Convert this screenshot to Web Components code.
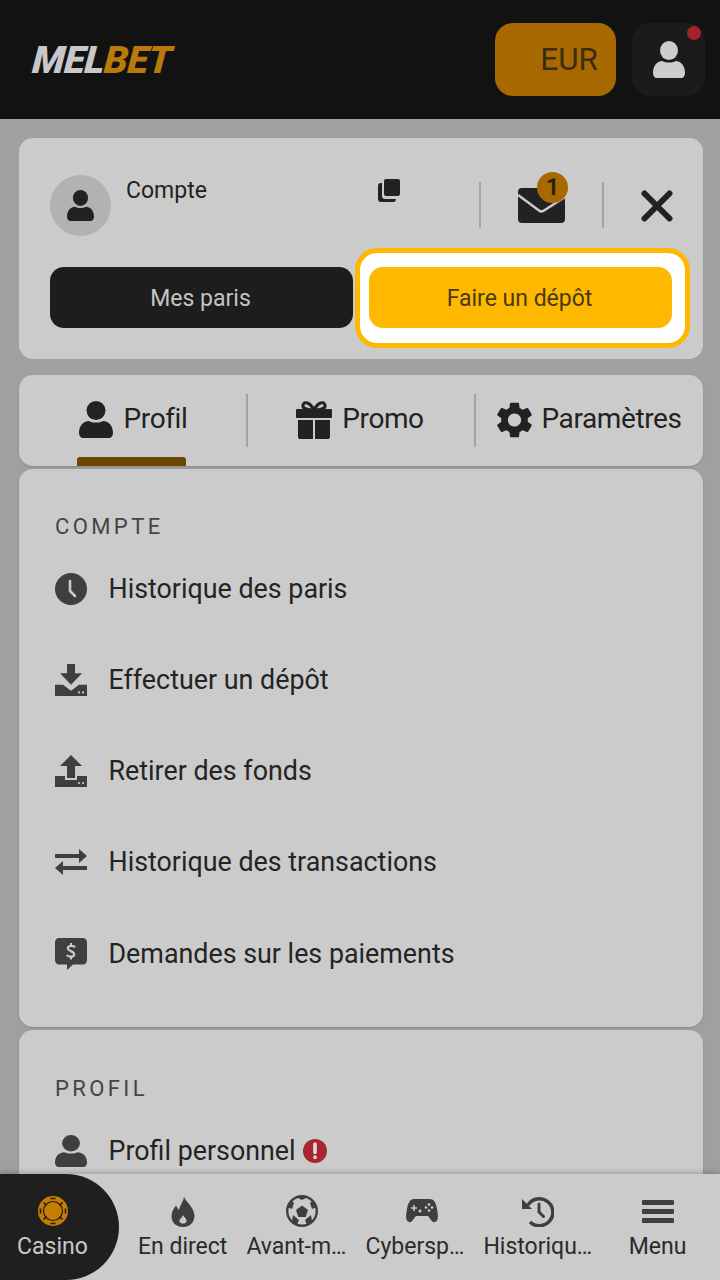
<!DOCTYPE html>
<html lang="fr">
<head>
<meta charset="utf-8">
<title>Melbet</title>
<style>
    html, body { margin: 0; height: 100%; }
    body {
        width: 720px;
        height: 1280px;
        overflow: hidden;
        display: flex;
        flex-direction: column;
        background: #a0a0a0;
        color: #222;
        font-family: Roboto, "Liberation Sans", sans-serif;
    }
    main {
        flex: 1;
        min-height: 0;
        overflow: hidden;
        display: flex;
        flex-direction: column;
        padding: 19px 17px 0 19px;
    }
</style>
</head>
<body>
<app-header></app-header>
<main>
    <account-card></account-card>
    <tab-bar></tab-bar>
    <menu-section title="COMPTE" top="44" bottom="28">
        <menu-item icon="clock">Historique des paris</menu-item>
        <menu-item icon="download">Effectuer un dépôt</menu-item>
        <menu-item icon="upload">Retirer des fonds</menu-item>
        <menu-item icon="transfer">Historique des transactions</menu-item>
        <menu-item icon="payment">Demandes sur les paiements</menu-item>
    </menu-section>
    <menu-section title="PROFIL" top="45" bottom="60">
        <menu-item icon="person" alert>Profil personnel</menu-item>
    </menu-section>
</main>
<bottom-nav>
    <nav-item icon="chip" active>Casino</nav-item>
    <nav-item icon="flame">En direct</nav-item>
    <nav-item icon="ball" shift="12">Avant-m…</nav-item>
    <nav-item icon="pad" shift="14">Cybersp…</nav-item>
    <nav-item icon="history">Historiqu…</nav-item>
    <nav-item icon="bars" last>Menu</nav-item>
</bottom-nav>

<script>
const ICONS = {
    person: ['0 0 34 37', `<circle cx="17" cy="9.5" r="9.5"/><path d="M0 32C0 24 5 20 10 20c3 2 11 2 14 0 5 0 10 4 10 12 0 3-2 5-4 5H4c-2 0-4-2-4-5z"/>`],
    gift: ['0 0 36 38', `<path d="M18 9C14 1 8 0 7 4s6 5 11 5 12-1 11-5-7-3-11 5z" fill="none" stroke="currentColor" stroke-width="3"/><rect y="8" width="36" height="9" rx="1"/><path d="M2 19h15v19H4a2 2 0 0 1-2-2zM19 19h15v17a2 2 0 0 1-2 2H19z"/>`],
    gear: ['2 1.5 20 21', `<path d="M19.14 12.94c.04-.3.06-.61.06-.94 0-.32-.02-.64-.07-.94l2.03-1.58c.18-.14.23-.41.12-.61l-1.92-3.32c-.12-.22-.37-.29-.59-.22l-2.39.96c-.5-.38-1.03-.7-1.62-.94l-.36-2.54c-.04-.24-.24-.41-.48-.41h-3.84c-.24 0-.43.17-.47.41l-.36 2.54c-.59.24-1.13.57-1.62.94l-2.39-.96c-.22-.08-.47 0-.59.22L2.74 8.87c-.12.21-.08.47.12.61l2.03 1.58c-.05.3-.09.63-.09.94s.02.64.07.94l-2.03 1.58c-.18.14-.23.41-.12.61l1.92 3.32c.12.22.37.29.59.22l2.39-.96c.5.38 1.03.7 1.62.94l.36 2.54c.05.24.24.41.48.41h3.84c.24 0 .44-.17.47-.41l.36-2.54c.59-.24 1.13-.56 1.62-.94l2.39.96c.22.08.47 0 .59-.22l1.92-3.32c.12-.22.07-.47-.12-.61l-2.01-1.58zM12 15.6c-1.98 0-3.6-1.62-3.6-3.6s1.62-3.6 3.6-3.6 3.6 1.62 3.6 3.6-1.62 3.6-3.6 3.6z"/>`],
    clock: ['0 0 32 32', `<circle cx="16" cy="16" r="16"/><path d="M15 8v10l5 5" fill="none" stroke="#cbcbcb" stroke-width="2.6" stroke-linecap="round" stroke-linejoin="round"/>`],
    download: ['0 0 32 31', `<path d="M12 0h8v9h7L16 20 5 9h7z"/><path d="M0 20h8l8 6 8-6h8v11H0z"/><circle cx="24" cy="27.5" r="1.1" fill="#cbcbcb"/><circle cx="28" cy="27.5" r="1.1" fill="#cbcbcb"/>`],
    upload: ['0 0 32 32', `<path d="M16 0l11 11h-7v12h-8V11H5z"/><path d="M0 21h10v4h12v-4h10v11H0z"/><circle cx="24" cy="28" r="1.1" fill="#cbcbcb"/><circle cx="28" cy="28" r="1.1" fill="#cbcbcb"/>`],
    transfer: ['0 0 32 26', `<path d="M0 5h24V0l8 7-8 7V9H0z"/><path d="M32 17H8v-5l-8 7 8 7v-5h24z"/>`],
    payment: ['0 0 32 29', `<path d="M4 0h24a4 4 0 0 1 4 4v16a4 4 0 0 1-4 4H18l-6 5v-5H4a4 4 0 0 1-4-4V4a4 4 0 0 1 4-4z"/><path d="M20 8.500c-1-1.700-6.500-2-7.200.4-.8 3.200 7.200 2.800 6.400 6.400-.6 2.200-6.200 2.200-7.200 0M16 4.500v2.200M16 17.300v2.200" fill="none" stroke="#cbcbcb" stroke-width="2"/>`],
    copy: ['0 0 22 23', `<rect x="6" width="16" height="17" rx="2"/><path d="M0 7a3 3 0 0 1 3-3h1v13a3 3 0 0 0 3 3h11a3 3 0 0 1-3 3H3a3 3 0 0 1-3-3z"/>`],
    mail: ['0 0 47 35', `<rect width="47" height="35" rx="4"/><path d="M0 7l21 15.500q2.500 1.800 5 0L47 9" fill="none" stroke="#cbcbcb" stroke-width="2.500"/>`],
    close: ['0 0 32 32', `<path d="M3.500 3.500l25 25M28.500 3.500l-25 25" fill="none" stroke="currentColor" stroke-width="6" stroke-linecap="round"/>`],
    chip: ['0 0 30 30', `<circle cx="15" cy="15" r="15"/><circle cx="15" cy="15" r="9.500" fill="none" stroke="#1f1f1f" stroke-width="1.200"/><path d="M12.500 2.500h5M12.500 27.500h5M2.500 12.500v5M27.500 12.500v5M5.500 6.500l3 3M24.500 6.500l-3 3M5.500 23.500l3-3M24.500 23.500l-3-3" stroke="#1f1f1f" stroke-width="1.600" fill="none"/>`],
    flame: ['0 0 24 31', `<path d="M13 0c0 5 10 10 10.500 19.500 0 7-5 11.500-11.500 11.500S.5 27 .5 20c0-4 2-7 4.500-10.500 1 2 2 3.500 3 4.500C9 9 13 5 13 0z"/><path d="M12 19c1 2.500 4 3.500 3.500 6.500-.5 2.500-6 3-7 0-.5-2.500 2.500-3.500 3.500-6.500z" fill="#cbcbcb"/>`],
    ball: ['0 0 32 32', `<circle cx="16" cy="16" r="14.800" fill="none" stroke="currentColor" stroke-width="2.400"/><path d="M16 10.500l6 4.500-2.300 7h-7.400L10 15zM10 2l6 3 6-3-1-1H11zM1 12l5 2 2-6-3-3zM31 12l-5 2-2-6 3-3zM6 26l1-6 6 5-2 5zM26 26l-1-6-6 5 2 5z"/>`],
    pad: ['0 0 32 24', `<path d="M8 0h16c4 0 6 4 7 10s2 12-2 13c-3 1-5-4-7-6H10c-2 2-4 7-7 6C-1 22 0 16 1 10S4 0 8 0z"/><path d="M8 6v6M5 9h6M14 10.500v3M12.500 12h3" stroke="#cbcbcb" stroke-width="1.500" fill="none"/><circle cx="23" cy="5.500" r="1.300" fill="#cbcbcb"/><circle cx="26" cy="8.500" r="1.300" fill="#cbcbcb"/><circle cx="20" cy="8.500" r="1.300" fill="#cbcbcb"/><circle cx="23" cy="11.500" r="1.300" fill="#cbcbcb"/>`],
    history: ['0 0 32 31', `<path d="M6 9a13.500 13.500 0 1 1 2 17" fill="none" stroke="currentColor" stroke-width="3.500"/><path d="M0 3v10h10z"/><path d="M17 8v8l4.500 4.500" fill="none" stroke="currentColor" stroke-width="3" stroke-linecap="round"/>`],
    bars: ['0 0 32 23', `<rect width="32" height="5" rx="1"/><rect y="9" width="32" height="5" rx="1"/><rect y="18" width="32" height="5" rx="1"/>`]
};

class AppIcon extends HTMLElement {
    connectedCallback() {
        const [box, body] = ICONS[this.getAttribute('name')];
        const w = this.getAttribute('w');
        const h = this.getAttribute('h');
        this.attachShadow({ mode: 'open' }).innerHTML = `
            <style>
                :host { display: block; width: ${w}px; height: ${h}px; flex: none; }
                svg { display: block; width: 100%; height: 100%; fill: currentColor; }
            </style>
            <svg viewBox="${box}" preserveAspectRatio="none">${body}</svg>
        `;
    }
}

class AppHeader extends HTMLElement {
    constructor() {
        super();
        this.attachShadow({ mode: 'open' }).innerHTML = `
            <style>
                :host {
                    display: flex;
                    flex: none;
                    align-items: center;
                    height: 119px;
                    box-sizing: border-box;
                    padding: 0 15px 0 31px;
                    gap: 16px;
                    background: #121212;
                }
                .logo {
                    flex: 1;
                    font: italic 900 38px/1 Roboto, sans-serif;
                    letter-spacing: -0.4px;
                    color: #c8c8c8;
                    transform: skewX(-5deg);
                    transform-origin: left bottom;
                }
                .logo b { font-weight: 900; color: #b87a0a; }
                .currency {
                    display: flex;
                    align-items: center;
                    justify-content: flex-end;
                    box-sizing: border-box;
                    width: 121px;
                    height: 73px;
                    padding-right: 18px;
                    border-radius: 18px;
                    background: #a86a00;
                    color: #3a2d10;
                    font-size: 31.5px;
                }
                .user {
                    position: relative;
                    display: flex;
                    align-items: center;
                    justify-content: center;
                    width: 73px;
                    height: 73px;
                    border-radius: 18px;
                    background: #1b1b1b;
                    color: #cdcdcd;
                }
                .dot {
                    position: absolute;
                    top: 3px;
                    right: 4px;
                    width: 14px;
                    height: 14px;
                    border-radius: 50%;
                    background: #a3232b;
                }
            </style>
            <div class="logo">MEL<b>BET</b></div>
            <div class="currency">EUR</div>
            <div class="user">
                <app-icon name="person" w="32" h="37"></app-icon>
                <span class="dot"></span>
            </div>
        `;
    }
}

class AccountCard extends HTMLElement {
    constructor() {
        super();
        this.attachShadow({ mode: 'open' }).innerHTML = `
            <style>
                :host {
                    display: flex;
                    flex: none;
                    flex-direction: column;
                    gap: 31px;
                    box-sizing: border-box;
                    height: 221px;
                    padding: 37px 31px 31px;
                    border-radius: 14px;
                    background: #cbcbcb;
                    color: #222;
                }
                .top { display: flex; height: 61px; }
                .avatar {
                    display: flex;
                    flex: none;
                    align-items: center;
                    justify-content: center;
                    width: 61px;
                    height: 61px;
                    border-radius: 50%;
                    background: #b2b2b2;
                }
                .name {
                    flex: none;
                    width: 252px;
                    margin: 2px 0 0 15px;
                    font-size: 23px;
                    line-height: 28px;
                }
                .copy { margin: 4px 0 0; }
                .sep {
                    flex: none;
                    width: 2px;
                    height: 46px;
                    margin-top: 7px;
                    background: #a3a3a3;
                }
                .mail {
                    position: relative;
                    display: flex;
                    flex: none;
                    justify-content: center;
                    width: 121px;
                    padding-top: 13px;
                }
                .badge {
                    position: absolute;
                    top: -3px;
                    left: 56px;
                    width: 31px;
                    height: 31px;
                    border-radius: 50%;
                    background: #a86a00;
                    color: #2a2110;
                    font: 700 23px/31px Roboto, sans-serif;
                    text-align: center;
                }
                .close { margin: 15px -1px 0 37px; color: #222; }
                .actions { display: grid; grid-template-columns: 303px 303px; gap: 16px; }
                .slot { position: relative; }
                .btn {
                    position: relative;
                    box-sizing: border-box;
                    height: 61px;
                    padding-right: 2px;
                    border-radius: 14px;
                    font-size: 23px;
                    line-height: 63px;
                    text-align: center;
                }
                .dark { background: #1d1d1d; color: #c4c4c4; }
                .deposit { background: #ffb800; color: #4a3a10; }
                .ring {
                    position: absolute;
                    top: -19px;
                    right: -18px;
                    bottom: -20px;
                    left: -14px;
                    box-sizing: border-box;
                    border: 5px solid #ffb800;
                    border-radius: 22px;
                    background: #fff;
                }
            </style>
            <div class="top">
                <div class="avatar"><app-icon name="person" w="27" h="31"></app-icon></div>
                <div class="name">Compte</div>
                <app-icon class="copy" name="copy" w="22" h="23"></app-icon>
                <span class="sep" style="margin-left:79px"></span>
                <div class="mail">
                    <app-icon name="mail" w="47" h="35"></app-icon>
                    <span class="badge">1</span>
                </div>
                <span class="sep"></span>
                <app-icon class="close" name="close" w="32" h="32"></app-icon>
            </div>
            <div class="actions">
                <div class="btn dark">Mes paris</div>
                <div class="slot">
                    <span class="ring"></span>
                    <div class="btn deposit">Faire un dépôt</div>
                </div>
            </div>
        `;
    }
}

class TabBar extends HTMLElement {
    constructor() {
        super();
        this.attachShadow({ mode: 'open' }).innerHTML = `
            <style>
                :host {
                    display: grid;
                    flex: none;
                    grid-template-columns: repeat(3, 228px);
                    height: 91px;
                    margin-top: 16px;
                    border-radius: 14px;
                    background: #cbcbcb;
                    box-shadow: 0 1px 2px rgba(0,0,0,0.15);
                    color: #222;
                    font-size: 28px;
                    letter-spacing: -0.4px;
                    overflow: hidden;
                }
                .tab {
                    position: relative;
                    display: flex;
                    align-items: center;
                    justify-content: center;
                    gap: 11px;
                    padding-bottom: 4px;
                }
                .tab app-icon { margin-top: 2px; }
                .tab + .tab::before {
                    content: '';
                    position: absolute;
                    left: -1px;
                    top: 19px;
                    width: 2px;
                    height: 53px;
                    background: #a3a3a3;
                }
                .bar {
                    position: absolute;
                    left: 58px;
                    bottom: 0;
                    width: 109px;
                    height: 9px;
                    border-radius: 3px 3px 0 0;
                    background: #6b4700;
                }
            </style>
            <div class="tab">
                <app-icon name="person" w="34" h="37"></app-icon><span>Profil</span>
                <i class="bar"></i>
            </div>
            <div class="tab" style="gap:10px;padding-right:2px">
                <app-icon name="gift" w="36" h="38"></app-icon><span>Promo</span>
            </div>
            <div class="tab" style="gap:8px">
                <app-icon name="gear" w="37" h="38"></app-icon><span>Paramètres</span>
            </div>
        `;
    }
}

class MenuSection extends HTMLElement {
    connectedCallback() {
        this.attachShadow({ mode: 'open' }).innerHTML = `
            <style>
                :host {
                    display: block;
                    flex: none;
                    margin-top: 3px;
                    padding: ${this.getAttribute('top')}px 0 ${this.getAttribute('bottom')}px;
                    border-radius: 14px;
                    background: #cbcbcb;
                    box-shadow: 0 1px 2px rgba(0,0,0,0.15);
                }
                h2 {
                    margin: 0 0 0 36px;
                    height: 30px;
                    font: 400 22px/28px Roboto, sans-serif;
                    letter-spacing: 3.4px;
                    color: #444;
                }
            </style>
            <h2>${this.getAttribute('title')}</h2>
            <slot></slot>
        `;
    }
}

class MenuItem extends HTMLElement {
    connectedCallback() {
        const alert = this.hasAttribute('alert')
            ? '<svg class="alert" viewBox="0 0 24 24"><circle cx="12" cy="12" r="12" fill="#a82630"/><path d="M12 5v8.500M12 18v.5" stroke="#ddd" stroke-width="3.600" stroke-linecap="round"/></svg>'
            : '';
        this.attachShadow({ mode: 'open' }).innerHTML = `
            <style>
                :host {
                    display: flex;
                    align-items: center;
                    height: 91.25px;
                    padding-left: 36px;
                    font-size: 26.85px;
                    color: #242424;
                }
                .icon { display: flex; width: 32px; margin-right: 21.5px; color: #3f3f3f; }
                .alert { width: 24px; height: 24px; margin-left: 7px; }
            </style>
            <div class="icon"><app-icon name="${this.getAttribute('icon')}" w="32" h="${this.getAttribute('icon') === 'transfer' ? 26 : 32}"></app-icon></div>
            <slot></slot>${alert}
        `;
    }
}

class BottomNav extends HTMLElement {
    constructor() {
        super();
        this.attachShadow({ mode: 'open' }).innerHTML = `
            <style>
                :host {
                    position: relative;
                    display: flex;
                    flex: none;
                    gap: 19px;
                    height: 106px;
                    background: #cbcbcb;
                    box-shadow: 0 -2px 5px rgba(0,0,0,0.2);
                }
            </style>
            <slot></slot>
        `;
    }
}

const NAV_SIZES = { chip: [30, 30], flame: [24, 31], ball: [32, 32], pad: [32, 24], history: [32, 31], bars: [32, 23] };

class NavItem extends HTMLElement {
    connectedCallback() {
        const name = this.getAttribute('icon');
        const [w, h] = NAV_SIZES[name];
        const active = this.hasAttribute('active');
        this.attachShadow({ mode: 'open' }).innerHTML = `
            <style>
                :host {
                    display: flex;
                    flex: none;
                    flex-direction: column;
                    align-items: center;
                    box-sizing: border-box;
                    font-size: 23px;
                    line-height: 28px;
                    color: #2a2a2a;
                    white-space: nowrap;
                    ${active ? 'width: 119px; padding-right: 14px; border-radius: 0 56px 56px 0; background: #1f1f1f; color: #c8c8c8;' : ''}
                    ${this.hasAttribute('last') ? 'flex: 1; padding-right: 16px;' : ''}
                }
                .slot {
                    display: flex;
                    align-items: center;
                    height: 32px;
                    margin: 21px 0 6px ${this.getAttribute('shift') || 0}px;
                    color: ${active ? '#c47f00' : '#3f3f3f'};
                }
            </style>
            <div class="slot"><app-icon name="${name}" w="${w}" h="${h}"></app-icon></div>
            <slot></slot>
        `;
    }
}

customElements.define('app-icon', AppIcon);
customElements.define('app-header', AppHeader);
customElements.define('account-card', AccountCard);
customElements.define('tab-bar', TabBar);
customElements.define('menu-section', MenuSection);
customElements.define('menu-item', MenuItem);
customElements.define('bottom-nav', BottomNav);
customElements.define('nav-item', NavItem);
</script>
</body>
</html>
